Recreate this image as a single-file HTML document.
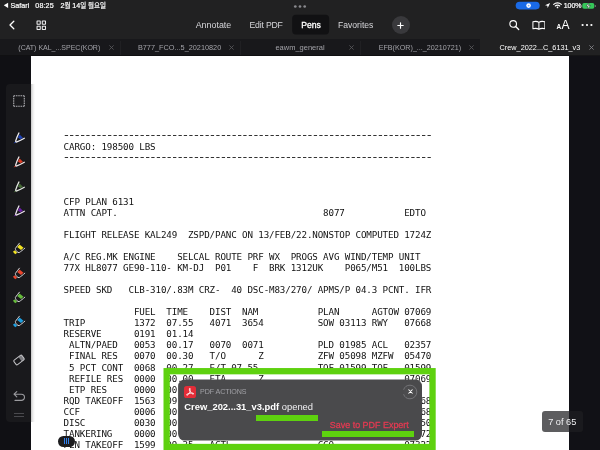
<!DOCTYPE html>
<html lang="ko">
<head>
<meta charset="utf-8">
<title>PDF Expert</title>
<style>
*{margin:0;padding:0;box-sizing:border-box}
html,body{width:600px;height:450px;overflow:hidden;background:#111116}
body{position:relative;font-family:"Liberation Sans","Noto Sans CJK KR",sans-serif;color:#fff;-webkit-font-smoothing:antialiased}
.abs{position:absolute}
#root{position:absolute;left:0;top:0;width:600px;height:450px;will-change:transform;overflow:hidden}
#topbar{position:absolute;left:0;top:0;width:600px;height:39px;background:#212122}
#tabbar{position:absolute;left:0;top:39px;width:600px;height:17px;background:#18181b}
#tabbar .active{position:absolute;left:480px;top:0;width:120px;height:17px;background:#212122}
.st{position:absolute;top:1.2px;font-size:7.15px;line-height:10px;font-weight:normal;-webkit-text-stroke:.2px #fff;color:#fff;white-space:nowrap}
.tb{position:absolute;top:19px;font-size:8.6px;line-height:12px;color:#d6d6da;white-space:nowrap}
.tab{position:absolute;top:2.9px;height:12px;line-height:12px;font-size:7.4px;color:#a2a2a8;white-space:nowrap}
#leftbg{position:absolute;left:0;top:56px;width:31px;height:394px;background:#101014}
#rightbg{position:absolute;left:569px;top:56px;width:31px;height:394px;background:#111116}
#page{position:absolute;left:31px;top:56px;width:538px;height:394px;background:#fff;overflow:hidden}
#doc{position:absolute;left:32.6px;top:73.55px;font-family:"DejaVu Sans Mono","Liberation Mono",monospace;font-size:9.2px;letter-spacing:-.125px;line-height:11.045px;color:#111;white-space:pre}
#doc .d{color:#333;font-size:13px;letter-spacing:-2.413px;line-height:0;position:relative;top:.55px;margin-left:-1.15px}
#palette{position:absolute;left:6px;top:84px;width:25px;height:338px;background:#19191c;border-radius:4px 0 0 4px}
</style>
</head>
<body>
<div id="root">
<div id="topbar">
  <svg class="abs" style="left:3.2px;top:2.3px" width="7" height="7" viewBox="0 0 7 7"><path d="M5.1 0.7 L5.1 5.9 L0.8 3.3 Z" fill="#fff"/></svg>
  <div class="st" style="left:10.6px">Safari</div>
  <div class="st" style="left:35.3px;letter-spacing:.12px">08:25</div>
  <div class="st" style="left:60.4px;letter-spacing:0"><span>2</span><span style="font-size:6.5px">월</span> 14<span style="font-size:6.5px">일 월요일</span></div>
  <svg class="abs" style="left:293px;top:4.4px" width="14" height="5" viewBox="0 0 14 5"><circle cx="2.3" cy="2.5" r="1.35" fill="#8a8a8f"/><circle cx="7" cy="2.5" r="1.35" fill="#8a8a8f"/><circle cx="11.7" cy="2.5" r="1.35" fill="#8a8a8f"/></svg>
  <!-- status right -->
  <svg class="abs" style="left:514px;top:0px" width="28" height="11" viewBox="0 0 28 11"><rect x="1.7" y="1.7" width="24" height="7.7" rx="3.85" fill="#1a6ae6"/><circle cx="14.6" cy="5.6" r="2.3" fill="#fff"/><circle cx="14.6" cy="5.6" r="0.9" fill="#7fb0f5"/></svg>
  <svg class="abs" style="left:544px;top:2px" width="7" height="7" viewBox="0 0 7 7"><path d="M6.1 1.1 L3.7 6 L3.3 3.8 L1 3.3 Z" fill="#fff"/></svg>
  <svg class="abs" style="left:553px;top:2.4px" width="9" height="6.4" viewBox="0 0 9 6.4"><path d="M0.7 2.4 A5.4 5.4 0 0 1 8.3 2.4" fill="none" stroke="#fff" stroke-width="1.15" stroke-linecap="round"/><path d="M2.3 4 A3.1 3.1 0 0 1 6.7 4" fill="none" stroke="#fff" stroke-width="1.15" stroke-linecap="round"/><circle cx="4.5" cy="5.4" r="0.85" fill="#fff"/></svg>
  <div class="st" style="left:563.7px;font-size:7px">100%</div>
  <svg class="abs" style="left:582px;top:2px" width="15" height="8" viewBox="0 0 15 8"><rect x="0.3" y="1" width="12" height="5.8" rx="1.7" fill="#35c759"/><rect x="12.8" y="2.9" width="1" height="2.1" rx="0.5" fill="#7d7d80"/><path d="M6.9 0.7 L4 4.2 L6 4.2 L5.5 7.2 L8.5 3.5 L6.5 3.5 Z" fill="#fff" stroke="#1d1d1f" stroke-width="0.45"/></svg>
  <!-- toolbar left -->
  <svg class="abs" style="left:7px;top:19px" width="10" height="12" viewBox="0 0 10 12"><path d="M6.8 2.3 L3 6 L6.8 9.7" fill="none" stroke="#fff" stroke-width="1.3" stroke-linecap="round" stroke-linejoin="round"/></svg>
  <svg class="abs" style="left:36px;top:20px" width="11" height="11" viewBox="0 0 11 11"><g fill="none" stroke="#ececee" stroke-width="1.05"><rect x="1.05" y="1.05" width="3.2" height="3.2" rx="0.25"/><rect x="6.3" y="1.05" width="3.2" height="3.2" rx="0.25"/><rect x="1.05" y="6.3" width="3.2" height="3.2" rx="0.25"/><rect x="6.3" y="6.3" width="3.2" height="3.2" rx="0.25"/></g></svg>
  <!-- toolbar center -->
  <div class="tb" style="left:195.7px;font-size:8.9px">Annotate</div>
  <div class="tb" style="left:249.5px;font-size:8.7px;letter-spacing:-.2px">Edit PDF</div>
  <svg class="abs" style="left:290px;top:12px" width="42" height="26" viewBox="0 0 42 26"><rect x="2.2" y="2.7" width="36.9" height="19.7" rx="3.6" fill="#111113"/></svg>
  <div class="tb" style="left:301.2px;color:#fff;font-size:8.65px;-webkit-text-stroke:.3px #fff">Pens</div>
  <div class="tb" style="left:338px">Favorites</div>
  <div class="abs" style="left:391.5px;top:16px;width:18px;height:18px;border-radius:9px;background:#39393c"></div>
  <svg class="abs" style="left:396px;top:20.5px" width="9" height="9" viewBox="0 0 9 9"><path d="M4.5 1.8 V7.2 M1.8 4.5 H7.2" stroke="#fff" stroke-width="1.15" stroke-linecap="round"/></svg>
  <!-- toolbar right -->
  <svg class="abs" style="left:507.6px;top:19.4px" width="12" height="12" viewBox="0 0 13 13"><circle cx="5.6" cy="5.4" r="3.6" fill="none" stroke="#fff" stroke-width="1.2"/><path d="M8.3 8.1 L11.6 11.4" stroke="#fff" stroke-width="1.4" stroke-linecap="round"/></svg>
  <svg class="abs" style="left:531.7px;top:19.6px" width="13.8" height="11" viewBox="0 0 15 11"><path d="M7.5 2.2 C6 1 3 0.9 1 1.5 V9 C3 8.5 6 8.6 7.5 9.8 C9 8.6 12 8.5 14 9 V1.5 C12 0.9 9 1 7.5 2.2 Z M7.5 2.2 V9.8" fill="none" stroke="#fff" stroke-width="1.1" stroke-linejoin="round"/></svg>
  <div class="abs" style="left:556.5px;top:22.5px;font-size:6.5px;line-height:8px;color:#fff;font-weight:bold">A</div>
  <div class="abs" style="left:561.5px;top:17.5px;font-size:12px;line-height:14px;color:#fff">A</div>
  <svg class="abs" style="left:581px;top:23px" width="12" height="4" viewBox="0 0 12 4"><circle cx="1.6" cy="2" r="1.1" fill="#fff"/><circle cx="6" cy="2" r="1.1" fill="#fff"/><circle cx="10.4" cy="2" r="1.1" fill="#fff"/></svg>
</div>
<div id="tabbar"><div class="active"></div>
  <div class="abs" style="left:0;top:16px;width:600px;height:1px;background:rgba(0,0,0,.32)"></div>
  <div class="abs" style="left:120px;top:2px;width:1px;height:14px;background:rgba(255,255,255,.035)"></div><div class="abs" style="left:240px;top:2px;width:1px;height:14px;background:rgba(255,255,255,.035)"></div><div class="abs" style="left:360px;top:2px;width:1px;height:14px;background:rgba(255,255,255,.035)"></div>
  <div class="tab" style="left:18.3px;font-size:7px">(CAT) KAL_...SPEC(KOR)</div><svg class="abs" style="left:108.5px;top:6px" width="5" height="5" viewBox="0 0 6 6"><path d="M0.8 0.8 L5.2 5.2 M5.2 0.8 L0.8 5.2" stroke="#5a5a5e" stroke-width="1" stroke-linecap="round"/></svg>
  <div class="tab" style="left:137.9px;font-size:7.32px">B777_FCO...5_20210820</div><svg class="abs" style="left:228.5px;top:6px" width="5" height="5" viewBox="0 0 6 6"><path d="M0.8 0.8 L5.2 5.2 M5.2 0.8 L0.8 5.2" stroke="#5a5a5e" stroke-width="1" stroke-linecap="round"/></svg>
  <div class="tab" style="left:275.4px;font-size:7.5px">eawm_general</div><svg class="abs" style="left:348.5px;top:6px" width="5" height="5" viewBox="0 0 6 6"><path d="M0.8 0.8 L5.2 5.2 M5.2 0.8 L0.8 5.2" stroke="#5a5a5e" stroke-width="1" stroke-linecap="round"/></svg>
  <div class="tab" style="left:378.7px;font-size:7.16px">EFB(KOR)_..._20210721)</div><svg class="abs" style="left:469px;top:6px" width="5" height="5" viewBox="0 0 6 6"><path d="M0.8 0.8 L5.2 5.2 M5.2 0.8 L0.8 5.2" stroke="#5a5a5e" stroke-width="1" stroke-linecap="round"/></svg>
  <div class="tab" style="left:499.6px;font-size:7.3px;color:#fff">Crew_2022...C_6131_v3</div><svg class="abs" style="left:589.2px;top:6px" width="5" height="5" viewBox="0 0 6 6"><path d="M0.8 0.8 L5.2 5.2 M5.2 0.8 L0.8 5.2" stroke="#8a8a8f" stroke-width="1" stroke-linecap="round"/></svg>
</div>
<div id="leftbg"></div>
<div id="rightbg"></div>
<div id="page">
<pre id="doc"><span class="d">--------------------------------------------------------------------</span>
CARGO: 198500 LBS
<span class="d">--------------------------------------------------------------------</span>



CFP PLAN 6131
ATTN CAPT.                                      8077           EDTO

FLIGHT RELEASE KAL249  ZSPD/PANC ON 13/FEB/22.NONSTOP COMPUTED 1724Z

A/C REG.MK ENGINE    SELCAL ROUTE PRF WX  PROGS AVG WIND/TEMP UNIT
77X HL8077 GE90-110- KM-DJ  P01    F  BRK 1312UK    P065/M51  100LBS

SPEED SKD   CLB-310/.83M CRZ-  40 DSC-M83/270/ APMS/P 04.3 PCNT. IFR

             FUEL  TIME    DIST  NAM           PLAN      AGTOW 07069
TRIP         1372  07.55   4071  3654          SOW 03113 RWY   07668
RESERVE      0191  01.14
 ALTN/PAED   0053  00.17   0070  0071          PLD 01985 ACL   02357
 FINAL RES   0070  00.30   T/O      Z          ZFW 05098 MZFW  05470
 5 PCT CONT  0068  00.27   E/T 07.55           TOF 01599 TOF   01599
 REFILE RES  0000  00.00   ETA      Z                          07069
 ETP RES     0000  00.00
RQD TAKEOFF  1563  09.21                                       02568
CCF          0006  00.03                                       04368
DISC         0030  00.10                                       05750
TANKERING    0000  00.00                                       00172
PLN TAKEOFF  1599  09.35   ACTL                CCO             07322
</pre>
</div>
<div class="abs" style="left:31px;top:84px;width:4px;height:338px;background:linear-gradient(90deg,rgba(0,0,0,.22),rgba(0,0,0,.07) 50%,rgba(0,0,0,0))"></div>
<div id="palette">
  <!-- selection -->
  <svg class="abs" style="left:6.1px;top:10.1px" width="14" height="14" viewBox="0 0 15 15"><path d="M1.85 3.45 V2.55 Q1.85 1.85 2.55 1.85 H3.45 M11.55 1.85 H12.450000000000001 Q13.15 1.85 13.15 2.55 V3.45 M13.15 11.55 V12.450000000000001 Q13.15 13.15 12.450000000000001 13.15 H11.55 M3.45 13.15 H2.55 Q1.85 13.15 1.85 12.450000000000001 V11.55 M4.35 1.85 H5.85 M4.35 13.15 H5.85 M1.85 4.35 V5.85 M13.15 4.35 V5.85 M6.75 1.85 H8.25 M6.75 13.15 H8.25 M1.85 6.75 V8.25 M13.15 6.75 V8.25 M9.15 1.85 H10.65 M9.15 13.15 H10.65 M1.85 9.15 V10.65 M13.15 9.15 V10.65" fill="none" stroke="#b8b8bc" stroke-width="1.1"/></svg>
  <!-- pens -->
  <svg class="abs pen" style="left:6px;top:45.9px" width="16" height="16" viewBox="0 0 16 16"><path d="M7.6 4.6 L10.9 7.8 L8.4 9.2 L5.9 7.6 Z" fill="#1d41b4"/><path d="M1.5 13.6 L3.2 11.6 L4.2 12.6 Z" fill="#1d41b4"/><path d="M6.9 3 C5.6 5.6 4.5 8.2 3.7 10.9 C3.5 11.7 4 12.2 4.8 11.9 C7.4 10.9 9.9 9.7 12.3 8.3" fill="none" stroke="#ececf0" stroke-width="1.3" stroke-linecap="round" stroke-linejoin="round"/></svg>
  <svg class="abs pen" style="left:6px;top:70.2px" width="16" height="16" viewBox="0 0 16 16"><path d="M7.6 4.6 L10.9 7.8 L8.4 9.2 L5.9 7.6 Z" fill="#de3b24"/><path d="M1.5 13.6 L3.2 11.6 L4.2 12.6 Z" fill="#de3b24"/><path d="M6.9 3 C5.6 5.6 4.5 8.2 3.7 10.9 C3.5 11.7 4 12.2 4.8 11.9 C7.4 10.9 9.9 9.7 12.3 8.3" fill="none" stroke="#f0e4e4" stroke-width="1.3" stroke-linecap="round" stroke-linejoin="round"/></svg>
  <svg class="abs pen" style="left:6px;top:94.5px" width="16" height="16" viewBox="0 0 16 16"><path d="M7.6 4.6 L10.9 7.8 L8.4 9.2 L5.9 7.6 Z" fill="#456a35"/><path d="M1.5 13.6 L3.2 11.6 L4.2 12.6 Z" fill="#456a35"/><path d="M6.9 3 C5.6 5.6 4.5 8.2 3.7 10.9 C3.5 11.7 4 12.2 4.8 11.9 C7.4 10.9 9.9 9.7 12.3 8.3" fill="none" stroke="#e2e8e0" stroke-width="1.3" stroke-linecap="round" stroke-linejoin="round"/></svg>
  <svg class="abs pen" style="left:6px;top:118.8px" width="16" height="16" viewBox="0 0 16 16"><path d="M7.6 4.6 L10.9 7.8 L8.4 9.2 L5.9 7.6 Z" fill="#6a1fa6"/><path d="M1.5 13.6 L3.2 11.6 L4.2 12.6 Z" fill="#6a1fa6"/><path d="M6.9 3 C5.6 5.6 4.5 8.2 3.7 10.9 C3.5 11.7 4 12.2 4.8 11.9 C7.4 10.9 9.9 9.7 12.3 8.3" fill="none" stroke="#ebe0ee" stroke-width="1.3" stroke-linecap="round" stroke-linejoin="round"/></svg>
  <!-- highlighters -->
  <svg class="abs hl" style="left:6px;top:157.2px" width="16" height="16" viewBox="0 0 16 16"><path d="M7.5 3.5 L11.5 6.7 L9 9 L5.2 6.1 Z" fill="#f2e322"/><path d="M0.9 10.7 L3 9.3 L5.2 11.8 L3.2 13.3 Z" fill="#f2e322"/><path d="M7.4 2.2 C6 4 4.6 5.6 3.4 7.4 C3.4 8.6 3.9 9.6 4.9 10.6 C5.6 11.4 6.4 11.7 7.2 11.6 C9 10.4 10.8 9 12.8 7.2" fill="none" stroke="#d2d2d5" stroke-width="1" stroke-linecap="round" stroke-linejoin="round"/></svg>
  <svg class="abs hl" style="left:6px;top:181.5px" width="16" height="16" viewBox="0 0 16 16"><path d="M7.5 3.5 L11.5 6.7 L9 9 L5.2 6.1 Z" fill="#ea452c"/><path d="M0.9 10.7 L3 9.3 L5.2 11.8 L3.2 13.3 Z" fill="#ea452c"/><path d="M7.4 2.2 C6 4 4.6 5.6 3.4 7.4 C3.4 8.6 3.9 9.6 4.9 10.6 C5.6 11.4 6.4 11.7 7.2 11.6 C9 10.4 10.8 9 12.8 7.2" fill="none" stroke="#d2d2d5" stroke-width="1" stroke-linecap="round" stroke-linejoin="round"/></svg>
  <svg class="abs hl" style="left:6px;top:206px" width="16" height="16" viewBox="0 0 16 16"><path d="M7.5 3.5 L11.5 6.7 L9 9 L5.2 6.1 Z" fill="#66bb3c"/><path d="M0.9 10.7 L3 9.3 L5.2 11.8 L3.2 13.3 Z" fill="#66bb3c"/><path d="M7.4 2.2 C6 4 4.6 5.6 3.4 7.4 C3.4 8.6 3.9 9.6 4.9 10.6 C5.6 11.4 6.4 11.7 7.2 11.6 C9 10.4 10.8 9 12.8 7.2" fill="none" stroke="#d2d2d5" stroke-width="1" stroke-linecap="round" stroke-linejoin="round"/></svg>
  <svg class="abs hl" style="left:6px;top:230px" width="16" height="16" viewBox="0 0 16 16"><path d="M7.5 3.5 L11.5 6.7 L9 9 L5.2 6.1 Z" fill="#1f9fe0"/><path d="M0.9 10.7 L3 9.3 L5.2 11.8 L3.2 13.3 Z" fill="#1f9fe0"/><path d="M7.4 2.2 C6 4 4.6 5.6 3.4 7.4 C3.4 8.6 3.9 9.6 4.9 10.6 C5.6 11.4 6.4 11.7 7.2 11.6 C9 10.4 10.8 9 12.8 7.2" fill="none" stroke="#d2d2d5" stroke-width="1" stroke-linecap="round" stroke-linejoin="round"/></svg>
  <!-- eraser -->
  <svg class="abs" style="left:5.1px;top:267.8px" width="16" height="16" viewBox="0 0 16 16"><g transform="rotate(-37 8 8)"><path d="M9.4 5.2 H11.9 A1.1 1.1 0 0 1 13 6.3 V9.7 A1.1 1.1 0 0 1 11.9 10.8 H9.4 Z" fill="#7c7c80"/><rect x="3" y="5.2" width="10" height="5.6" rx="1.1" fill="none" stroke="#c2c2c5" stroke-width="1"/></g></svg>
  <!-- undo -->
  <svg class="abs" style="left:6px;top:305.5px" width="15" height="13" viewBox="0 0 15 13"><path d="M4.8 1.6 L2 4.2 L4.8 6.8 M2.4 4.2 H9.4 A3.1 3.1 0 0 1 9.4 10.4 H3" fill="none" stroke="#9c9ca0" stroke-width="1.1" stroke-linecap="round" stroke-linejoin="round"/></svg>
  <!-- handle -->
  <div class="abs" style="left:8px;top:329px;width:9.5px;height:1px;background:#4a4a4e"></div>
  <div class="abs" style="left:8px;top:332px;width:9.5px;height:1px;background:#4a4a4e"></div>
</div>
<!-- blue pill -->
<div class="abs" style="left:57.5px;top:436px;width:17.5px;height:10.8px;border-radius:5.4px;background:#1c1c1e"></div>
<div class="abs" style="left:63.6px;top:438.3px;width:1.3px;height:6.2px;background:#2f80ed"></div>
<div class="abs" style="left:65.9px;top:438.3px;width:1.3px;height:6.2px;background:#2f80ed"></div>
<div class="abs" style="left:68.2px;top:438.3px;width:1.3px;height:6.2px;background:#2f80ed"></div>
<!-- green highlight box -->
<svg class="abs" style="left:160px;top:365px" width="280" height="90" viewBox="0 0 280 90"><rect x="6.65" y="6.2" width="265.9" height="75.8" fill="none" stroke="#5ed10f" stroke-width="6.3"/></svg>
<!-- popup -->
<div id="popup" class="abs" style="left:177.5px;top:379.5px;width:244.5px;height:61px">
  <svg class="abs" style="left:-1.5px;top:-1.5px" width="248" height="64" viewBox="0 0 248 64"><rect x="2.1" y="1.6" width="243.9" height="61" rx="6.5" fill="#4a4a4c"/></svg>
  <div class="abs" style="left:6.5px;top:6.5px;width:11.5px;height:11.5px;border-radius:2.6px;background:#e32d38"></div>
  <svg class="abs" style="left:7.3px;top:7.3px" width="10" height="10" viewBox="0 0 17 17"><path d="M8.3 2.2 C7 2.2 7.2 4.6 8.6 7.4 C7.8 9.8 6.4 12.4 4.6 13.6 C3 14.6 2 13.6 3.2 12.6 C5.4 10.8 10.4 9.8 13.4 10.4 C15.4 10.9 14.8 12.6 13.2 12 C11 11 9.2 8.4 8.6 6.6 C8 4.6 9.4 2.2 8.3 2.2 Z" fill="none" stroke="#fff" stroke-width="1.5" stroke-linejoin="round"/></svg>
  <div class="abs" style="left:22.5px;top:7.5px;font-size:7.15px;line-height:10px;color:#a0a0a5;letter-spacing:-.1px;white-space:nowrap">PDF ACTIONS</div>
  <div class="abs" style="left:6.8px;top:21.7px;font-size:9.4px;line-height:12px;color:#fff;white-space:nowrap"><b>Crew_202...31_v3.pdf</b> <span style="color:#f0f0f2">opened</span></div>
  <div class="abs" style="left:78.5px;top:35px;width:62px;height:6px;background:#5ed10f"></div>
  <div class="abs" style="left:152.3px;top:39.9px;font-size:8.95px;line-height:12px;color:#e23a52;-webkit-text-stroke:.3px #e23a52;white-space:nowrap">Save to PDF Expert</div>
  <div class="abs" style="left:144.5px;top:51.5px;width:92px;height:6px;background:#5ed10f"></div>
  <svg class="abs" style="left:224.5px;top:4px" width="16" height="16" viewBox="0 0 16 16"><circle cx="8" cy="8" r="6.8" fill="#4c4c4e" stroke="#808084" stroke-width="0.75" stroke-dasharray="19 4.5 19.3 0"/></svg>
  <svg class="abs" style="left:230px;top:9.5px" width="5" height="5" viewBox="0 0 6 6"><path d="M0.9 0.9 L5.1 5.1 M5.1 0.9 L0.9 5.1" stroke="#fff" stroke-width="1.25" stroke-linecap="round"/></svg>
</div>
<!-- page badge -->
<div class="abs" style="left:542px;top:411.3px;width:40.5px;height:20.4px;border-radius:3px;background:rgba(30,30,33,.72)"></div>
<div class="abs" style="left:542px;top:415.5px;width:40.5px;text-align:center;font-size:9.2px;line-height:12px;color:#f2f2f4;white-space:nowrap">7 of 65</div>
</div>
</body>
</html>
